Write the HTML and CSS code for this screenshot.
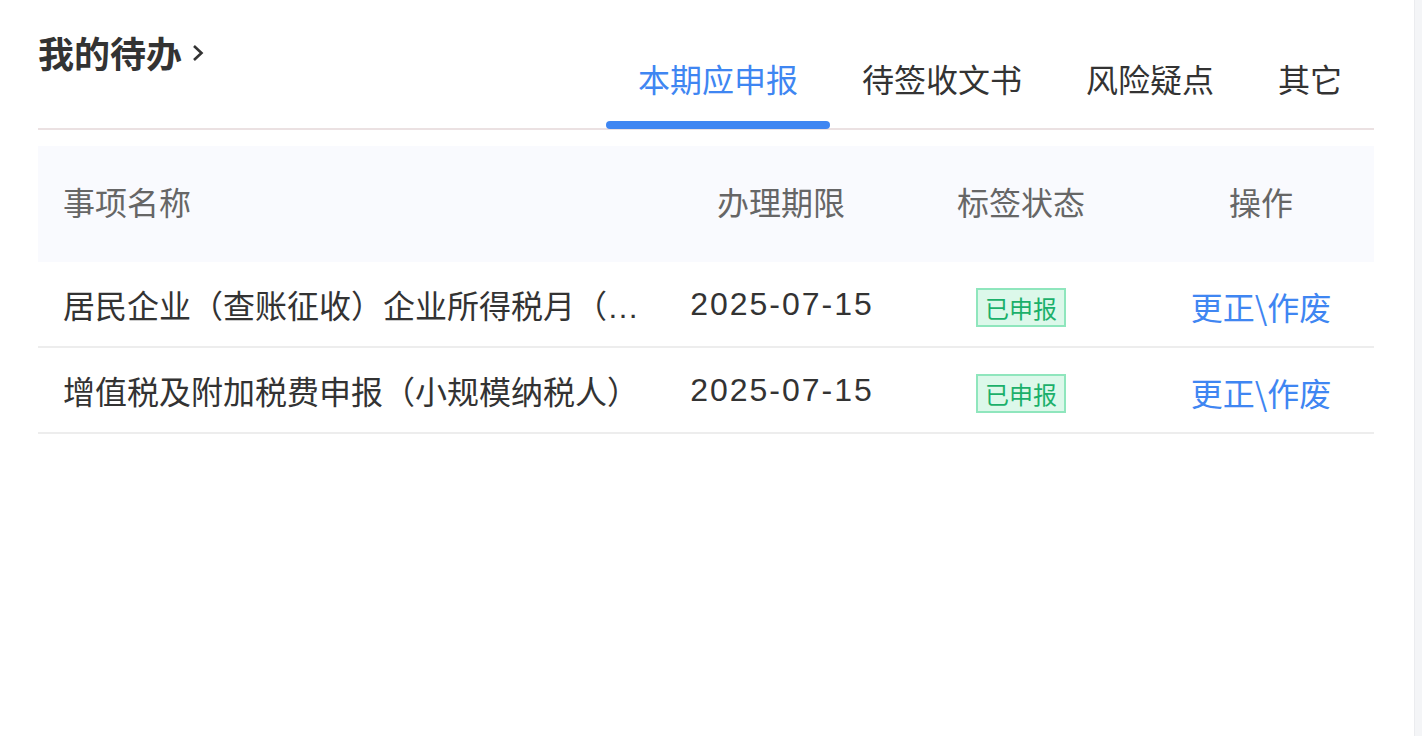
FILE: index.html
```html
<!DOCTYPE html>
<html lang="zh-CN">
<head>
<meta charset="utf-8">
<title>我的待办</title>
<link rel="stylesheet" href="styles.css">
</head>
<body>
<div class="page">
  <main class="content">
    <header class="head">
      <h2 class="title">我的待办<svg class="chev" width="12" height="18" viewBox="0 0 12 18"><path d="M2 2 L9.5 9 L2 16" fill="none" stroke="#333" stroke-width="2.6"/></svg></h2>
      <nav class="tabs">
        <span class="tab active">本期应申报</span>
        <span class="tab">待签收文书</span>
        <span class="tab">风险疑点</span>
        <span class="tab">其它</span>
      </nav>
    </header>
    <div class="table">
      <div class="row thead">
        <div class="cell name">事项名称</div>
        <div class="cell c">办理期限</div>
        <div class="cell c">标签状态</div>
        <div class="cell c op">操作</div>
      </div>
      <div class="row">
        <div class="cell name"><span class="ellip">居民企业（查账征收）企业所得税月（季）度申报</span></div>
        <div class="cell c date">2025-07-15</div>
        <div class="cell c"><span class="badge">已申报</span></div>
        <div class="cell c op"><a class="link">更正\作废</a></div>
      </div>
      <div class="row">
        <div class="cell name"><span class="ellip">增值税及附加税费申报（小规模纳税人）</span></div>
        <div class="cell c date">2025-07-15</div>
        <div class="cell c"><span class="badge">已申报</span></div>
        <div class="cell c op"><a class="link">更正\作废</a></div>
      </div>
    </div>
  </main>
  <aside class="scroll"></aside>
</div>
</body>
</html>
```
FILE: styles.css
```css
* { box-sizing: border-box; }
html, body { margin: 0; padding: 0; background: #fff; }
body {
  font-family: "Noto Sans CJK SC", "Noto Sans", sans-serif;
  color: #333;
}
.page {
  display: flex;
  height: 736px;
}
.content {
  flex: 1;
  padding: 0 40px 0 38px;
}
.scroll {
  width: 8px;
  background: #f4f5f7;
  border-left: 1px solid #ebecef;
}
.head {
  display: flex;
  justify-content: space-between;
  align-items: flex-end;
  border-bottom: 2px solid #ebe1e2;
  height: 130px;
}
.title {
  align-self: flex-start;
  margin: 30px 0 0 0;
  font-size: 36px;
  line-height: 44px;
  font-weight: 700;
  color: #333;
  display: flex;
  align-items: center;
}
.chev { margin-left: 10px; margin-top: 2px; }
.tabs {
  display: flex;
  margin-bottom: -2px;
}
.tab {
  font-size: 32px;
  line-height: 40px;
  padding: 0 32px 32px;
  color: #333;
  position: relative;
}
.tab.active { color: #3f86f2; }
.tab.active::after {
  content: "";
  position: absolute;
  left: 0;
  right: 0;
  bottom: 1px;
  height: 8px;
  border-radius: 4px;
  background: #3f86f2;
}
.table { margin-top: 16px; }
.row {
  display: grid;
  grid-template-columns: 623px 240px 240px 233px;
  align-items: center;
  height: 86px;
  border-bottom: 2px solid #ededed;
  font-size: 32px;
  color: #333;
}
.row.thead {
  height: 116px;
  background: #f9fafe;
  border-bottom: none;
  color: #666;
}
.cell { min-width: 0; }
.cell.name { padding: 0 16px 0 25px; }
.cell.c { text-align: center; }
.cell.op { padding-left: 7px; }
.thead .cell { padding-bottom: 6px; }
.ellip {
  display: block;
  white-space: nowrap;
  overflow: hidden;
  text-overflow: ellipsis;
  font-family: "Liberation Sans", "Noto Sans CJK SC", sans-serif;
}
.date {
  font-family: "Liberation Sans", "Noto Sans", sans-serif;
  font-size: 32px;
  letter-spacing: 2px;
  padding-left: 2px;
}
.badge {
  display: inline-block;
  font-size: 24px;
  line-height: 35px;
  padding: 0 7px;
  border: 2px solid #8fe6bd;
  background: #dcf8ea;
  color: #1bb06a;
  margin-top: 4px;
}
.link {
  color: #3f86f2;
  text-decoration: none;
  display: inline-block;
  margin-top: 4px;
}
```
